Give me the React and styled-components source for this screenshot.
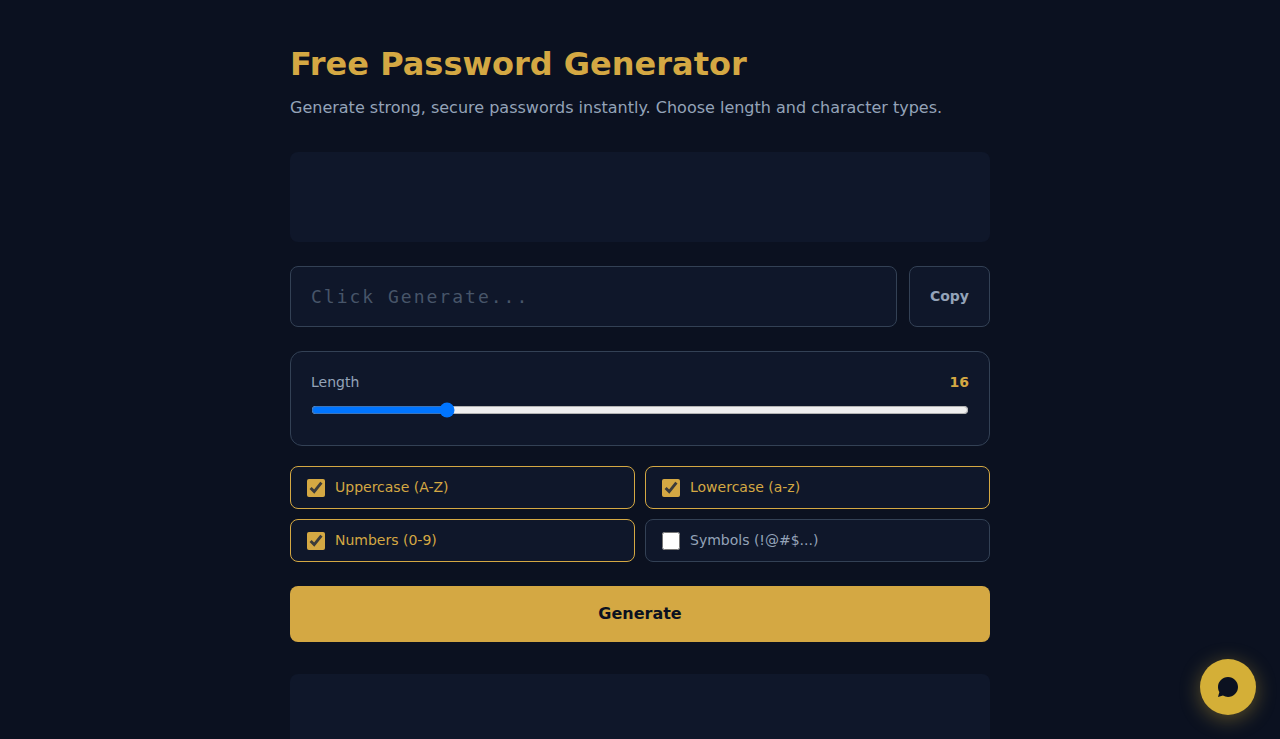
import React, { useState } from 'react';
import styled, { createGlobalStyle } from 'styled-components';

const GlobalStyle = createGlobalStyle`
  * {
    box-sizing: border-box;
  }
  html {
    scrollbar-width: none;
  }
  body {
    margin: 0;
    background: #0b1120;
    color: #94a3b8;
    font-family: 'DejaVu Sans', sans-serif;
    font-size: 16px;
    line-height: 1.5;
  }
  button,
  input {
    font-family: inherit;
    line-height: inherit;
  }
`;

const Main = styled.main`
  max-width: 740px;
  margin: 0 auto;
  padding: 40px 20px;
`;

const Title = styled.h1`
  margin: 0 0 8px;
  color: #d4a843;
  font-size: 32px;
  font-weight: 700;
  line-height: 48px;
`;

const Subtitle = styled.p`
  margin: 0 0 32px;
`;

const AdSlot = styled.div`
  min-height: ${props => props.$height}px;
  background: #0f172a;
  border-radius: 8px;
`;

const OutputRow = styled.div`
  display: flex;
  gap: 12px;
  margin: 24px 0;
`;

const PasswordField = styled.input`
  flex: 1;
  min-width: 0;
  height: 61px;
  padding: 0 20px;
  background: #0f172a;
  border: 1px solid #334155;
  border-radius: 8px;
  outline: none;
  color: #d4a843;
  font-family: 'DejaVu Sans Mono', monospace;
  font-size: 18px;
  letter-spacing: 2px;
  &::placeholder {
    color: #475569;
  }
`;

const CopyButton = styled.button`
  padding: 0 20px;
  background: #0f172a;
  border: 1px solid #334155;
  border-radius: 8px;
  color: #94a3b8;
  font-size: 14px;
  font-weight: 700;
  cursor: pointer;
`;

const LengthPanel = styled.div`
  padding: 20px;
  background: #0f172a;
  border: 1px solid #334155;
  border-radius: 12px;
`;

const LengthHeader = styled.div`
  display: flex;
  justify-content: space-between;
  margin-bottom: 9px;
  font-size: 14px;
`;

const LengthValue = styled.output`
  color: #d4a843;
  font-weight: 700;
`;

const Slider = styled.input`
  display: block;
  width: 100%;
  height: 16px;
  margin: 0 0 7px;
  cursor: pointer;
`;

const Options = styled.div`
  display: grid;
  grid-template-columns: 1fr 1fr;
  gap: 10px;
  margin: 20px 0 24px;
`;

const Option = styled.label`
  display: flex;
  align-items: center;
  gap: 10px;
  padding: 10px 16px;
  background: #0f172a;
  border: 1px solid ${props => (props.$active ? '#d4a843' : '#334155')};
  border-radius: 8px;
  color: ${props => (props.$active ? '#d4a843' : '#94a3b8')};
  font-size: 14px;
  cursor: pointer;
`;

const Checkbox = styled.input`
  width: 18px;
  height: 18px;
  margin: 0;
  accent-color: #d4a843;
`;

const GenerateButton = styled.button`
  display: block;
  width: 100%;
  margin-bottom: 32px;
  padding: 16px;
  background: #d4a843;
  border: 0;
  border-radius: 8px;
  color: #0b1120;
  font-size: 16px;
  font-weight: 700;
  cursor: pointer;
`;

const ChatButton = styled.button`
  position: fixed;
  right: 24px;
  bottom: 24px;
  display: flex;
  align-items: center;
  justify-content: center;
  width: 56px;
  height: 56px;
  padding: 0;
  background: #d4af37;
  border: 0;
  border-radius: 50%;
  box-shadow: 0 4px 20px rgba(212, 175, 55, 0.4);
  color: #0b1120;
  cursor: pointer;
`;

const CHARSETS = [
  { id: 'upper', label: 'Uppercase (A-Z)', chars: 'ABCDEFGHIJKLMNOPQRSTUVWXYZ' },
  { id: 'lower', label: 'Lowercase (a-z)', chars: 'abcdefghijklmnopqrstuvwxyz' },
  { id: 'numbers', label: 'Numbers (0-9)', chars: '0123456789' },
  { id: 'symbols', label: 'Symbols (!@#$...)', chars: '!@#$%^&*()_+-=[]{}' },
];

const App = () => {
  const [password, setPassword] = useState('');
  const [length, setLength] = useState(16);
  const [enabled, setEnabled] = useState({ upper: true, lower: true, numbers: true, symbols: false });

  const toggle = (id) => {
    setEnabled({ ...enabled, [id]: !enabled[id] });
  };

  const generate = () => {
    const pool = CHARSETS.filter(set => enabled[set.id]).map(set => set.chars).join('');
    if (!pool) return;
    const values = crypto.getRandomValues(new Uint32Array(length));
    setPassword(Array.from(values, value => pool[value % pool.length]).join(''));
  };

  const copy = () => {
    if (password) navigator.clipboard.writeText(password);
  };

  return (
    <>
      <GlobalStyle />
      <Main>
        <Title>Free Password Generator</Title>
        <Subtitle>Generate strong, secure passwords instantly. Choose length and character types.</Subtitle>
        <AdSlot $height={90} />
        <OutputRow>
          <PasswordField
            type="text"
            readOnly
            value={password}
            placeholder="Click Generate..."
            aria-label="Password"
          />
          <CopyButton type="button" onClick={copy}>Copy</CopyButton>
        </OutputRow>
        <LengthPanel>
          <LengthHeader>
            <label htmlFor="length">Length</label>
            <LengthValue htmlFor="length">{length}</LengthValue>
          </LengthHeader>
          <Slider
            id="length"
            type="range"
            min="4"
            max="64"
            value={length}
            onChange={event => setLength(Number(event.target.value))}
          />
        </LengthPanel>
        <Options>
          {CHARSETS.map(({ id, label }) => (
            <Option key={id} $active={enabled[id]}>
              <Checkbox type="checkbox" checked={enabled[id]} onChange={() => toggle(id)} />
              {label}
            </Option>
          ))}
        </Options>
        <GenerateButton type="button" onClick={generate}>Generate</GenerateButton>
        <AdSlot $height={250} />
      </Main>
      <ChatButton type="button" aria-label="Open chat">
        <svg width="24" height="24" viewBox="0 0 24 24" fill="currentColor" aria-hidden="true">
          <path d="M12 2C6.48 2 2 6.48 2 12c0 1.85.5 3.58 1.38 5.06L2 22l4.94-1.38A9.94 9.94 0 0 0 12 22c5.52 0 10-4.48 10-10S17.52 2 12 2z" />
        </svg>
      </ChatButton>
    </>
  );
};

export default App;
